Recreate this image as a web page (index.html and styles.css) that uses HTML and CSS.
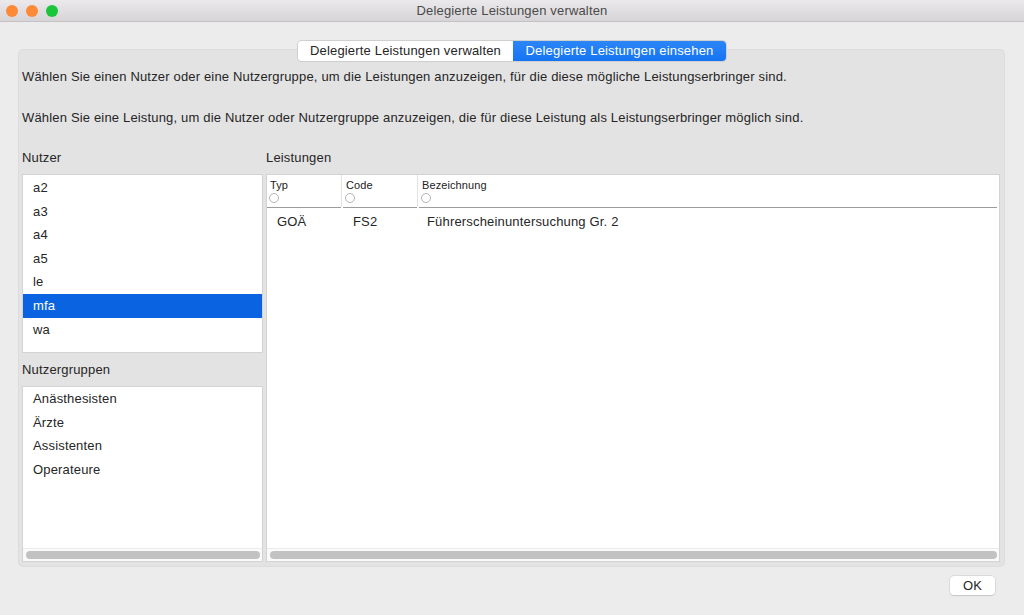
FILE: index.html
```html
<!DOCTYPE html>
<html>
<head>
<meta charset="utf-8">
<link rel="stylesheet" href="styles.css">
</head>
<body>
<div class="window">
  <div class="titlebar">
    <div class="lights">
      <span class="light orange"></span>
      <span class="light orange"></span>
      <span class="light green"></span>
    </div>
    <div class="title">Delegierte Leistungen verwalten</div>
  </div>
  <div class="content">
    <div class="tabs">
      <div class="tab">Delegierte Leistungen verwalten</div>
      <div class="tab active">Delegierte Leistungen einsehen</div>
    </div>
    <div class="group">
      <p class="info first">Wählen Sie einen Nutzer oder eine Nutzergruppe, um die Leistungen anzuzeigen, für die diese mögliche Leistungserbringer sind.</p>
      <p class="info second">Wählen Sie eine Leistung, um die Nutzer oder Nutzergruppe anzuzeigen, die für diese Leistung als Leistungserbringer möglich sind.</p>
      <div class="panes">
        <div class="left">
          <div class="label">Nutzer</div>
          <div class="list users">
            <div class="item">a2</div>
            <div class="item">a3</div>
            <div class="item">a4</div>
            <div class="item">a5</div>
            <div class="item">le</div>
            <div class="item selected">mfa</div>
            <div class="item">wa</div>
          </div>
          <div class="label groups-label">Nutzergruppen</div>
          <div class="list groups">
            <div class="items">
              <div class="item">Anästhesisten</div>
              <div class="item">Ärzte</div>
              <div class="item">Assistenten</div>
              <div class="item">Operateure</div>
            </div>
            <div class="scrolltrack"><div class="thumb"></div></div>
          </div>
        </div>
        <div class="right">
          <div class="label">Leistungen</div>
          <div class="table">
            <div class="thead">
              <div class="th c1"><span class="thname">Typ</span><span class="radio"></span></div>
              <div class="th c2"><span class="thname">Code</span><span class="radio"></span></div>
              <div class="th c3"><span class="thname">Bezeichnung</span><span class="radio"></span></div>
            </div>
            <div class="tbody">
              <div class="tr">
                <div class="td c1">GOÄ</div>
                <div class="td c2">FS2</div>
                <div class="td c3">Führerscheinuntersuchung Gr. 2</div>
              </div>
            </div>
            <div class="scrolltrack"><div class="thumb"></div></div>
          </div>
        </div>
      </div>
    </div>
    <div class="footer">
      <button class="ok">OK</button>
    </div>
  </div>
</div>
</body>
</html>
```
FILE: styles.css
```css
* { box-sizing: border-box; }
html, body { margin: 0; padding: 0; }
body {
  background: #ececec;
  font-family: "Liberation Sans", Arial, sans-serif;
  font-size: 13px;
  letter-spacing: 0.17px;
  color: #262626;
  width: 1024px;
  height: 615px;
  overflow: hidden;
}
.window { width: 1024px; height: 615px; display: flex; flex-direction: column; }
.titlebar {
  height: 22px;
  flex: none;
  background: linear-gradient(#ebe9eb, #d6d4d6);
  border-bottom: 1px solid #c4c2c4;
  display: flex;
  align-items: center;
  position: relative;
}
.lights { display: flex; gap: 8px; padding-left: 6px; }
.light { width: 12px; height: 12px; border-radius: 50%; display: block; }
.light.orange { background: #fc8a36; }
.light.green { background: #18c53b; }
.title {
  position: absolute;
  left: 0; right: 0; top: 3px;
  text-align: center;
  color: #4a4a4a;
  font-size: 13px;
  line-height: 16px;
}
.content { flex: 1; display: flex; flex-direction: column; padding: 19px 20px 0 19px; }
.tabs {
  align-self: center;
  display: flex;
  height: 20px;
  margin-left: 1px;
  border-radius: 4px;
  box-shadow: 0 0 0 1px #cfcfcf, 0 1px 1px rgba(0,0,0,0.08);
  position: relative;
  z-index: 2;
  overflow: hidden;
}
.tab {
  background: #fff;
  color: #262626;
  line-height: 20px;
  width: 215px;
  text-align: center;
  white-space: nowrap;
}
.tab.active { background: linear-gradient(#2b86f7, #1574f2); color: #fff; width: 213px; }
.group {
  margin-top: -11px;
  height: 516px;
  background: #e3e3e3;
  border-radius: 4px;
  box-shadow: 0 0 0 1px #dcdcdc;
  padding: 19px 3px 4px 3px;
  display: flex;
  flex-direction: column;
}
.info { margin: 0; line-height: 16px; white-space: nowrap; }
.info.second { margin-top: 25px; }
.panes { display: flex; gap: 3px; margin-top: 24px; flex: 1; }
.left { width: 241px; display: flex; flex-direction: column; }
.right { flex: 1; display: flex; flex-direction: column; margin-right: 1px; }
.label { line-height: 16px; margin-bottom: 8px; }
.groups-label { margin-top: 9px; }
.list {
  background: #fff;
  border: 1px solid #d3d3d3;
}
.users { height: 179px; padding-top: 1px; }
.groups { flex: 1; display: flex; flex-direction: column; }
.groups .items { flex: 1; }
.item { height: 23.6px; line-height: 23.6px; padding-left: 10px; }
.item.selected { background: #0a64e1; color: #fff; }
.scrolltrack {
  height: 13px;
  border-top: 1px solid #ececec;
  background: #fafafa;
  padding: 2px 2px 2px 3px;
}
.thumb { height: 8px; border-radius: 4px; background: #c2c2c2; }
.table {
  flex: 1;
  background: #fff;
  border: 1px solid #d3d3d3;
  display: flex;
  flex-direction: column;
}
.thead { display: flex; height: 33px; padding-right: 2px; }
.th {
  display: flex;
  flex-direction: column;
  padding: 3px 0 0 3px;
  border-bottom: 1px solid #9c9c9c;
  font-size: 11px;
  letter-spacing: 0.1px;
  line-height: 14px;
  color: #222;
  position: relative;
}
.th + .th { margin-left: 2px; }
.th + .th::before {
  content: "";
  position: absolute;
  left: -2px; top: 0; bottom: 0;
  width: 1px;
  background: #e2e2e2;
}
.radio {
  width: 10px; height: 10px;
  border-radius: 50%;
  border: 1px solid #b5b5b5;
  margin-top: 1px;
  margin-left: -1px;
}
.c1 { width: 74px; }
.c2 { width: 74px; }
.c3 { flex: 1; }
.tbody { flex: 1; }
.tr { display: flex; height: 27px; align-items: center; }
.td { padding-left: 10px; }
.td.c2, .td.c3 { margin-left: 2px; }
.td.c3 { padding-left: 8px; }
.footer { display: flex; justify-content: flex-end; padding: 10px 9px 0 0; }
.ok {
  width: 45px;
  height: 19px;
  background: #fff;
  border: none;
  border-radius: 4px;
  box-shadow: 0 0 0 0.5px #c8c8c8, 0 1px 1px rgba(0,0,0,0.15);
  font-family: "Liberation Sans", Arial, sans-serif;
  font-size: 13px;
  color: #262626;
  padding: 0;
  line-height: 19px;
}
```
